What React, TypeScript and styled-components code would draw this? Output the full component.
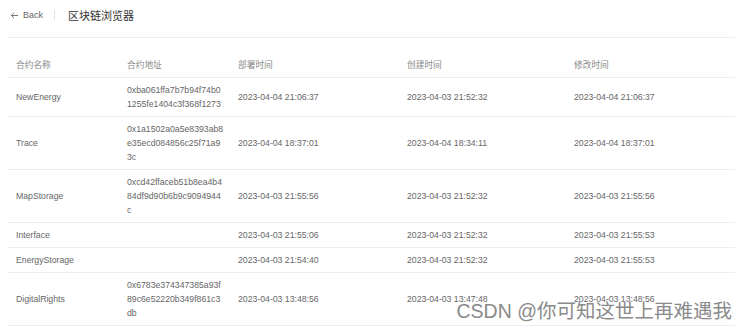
import React from "react";
import styled, { createGlobalStyle } from "styled-components";

type Contract = {
	name: string;
	address: string[];
	deployed: string;
	created: string;
	modified: string;
};

const contracts: Contract[] = [
	{
		name: "NewEnergy",
		address: ["0xba061ffa7b7b94f74b0", "1255fe1404c3f368f1273"],
		deployed: "2023-04-04 21:06:37",
		created: "2023-04-03 21:52:32",
		modified: "2023-04-04 21:06:37",
	},
	{
		name: "Trace",
		address: ["0x1a1502a0a5e8393ab8", "e35ecd084856c25f71a9", "3c"],
		deployed: "2023-04-04 18:37:01",
		created: "2023-04-04 18:34:11",
		modified: "2023-04-04 18:37:01",
	},
	{
		name: "MapStorage",
		address: ["0xcd42ffaceb51b8ea4b4", "84df9d90b6b9c9094944", "c"],
		deployed: "2023-04-03 21:55:56",
		created: "2023-04-03 21:52:32",
		modified: "2023-04-03 21:55:56",
	},
	{
		name: "Interface",
		address: [],
		deployed: "2023-04-03 21:55:06",
		created: "2023-04-03 21:52:32",
		modified: "2023-04-03 21:55:53",
	},
	{
		name: "EnergyStorage",
		address: [],
		deployed: "2023-04-03 21:54:40",
		created: "2023-04-03 21:52:32",
		modified: "2023-04-03 21:55:53",
	},
	{
		name: "DigitalRights",
		address: ["0x6783e374347385a93f", "89c6e52220b349f861c3", "db"],
		deployed: "2023-04-03 13:48:56",
		created: "2023-04-03 13:47:48",
		modified: "2023-04-03 13:48:56",
	},
];

const columns = ["合约名称", "合约地址", "部署时间", "创建时间", "修改时间"];
const widths = [111, 111, 169, 167, 169];

const GlobalStyle = createGlobalStyle`
	body {
		margin: 0;
		background: #fff;
		font-family: "Liberation Sans", Arial, "Noto Sans CJK SC", sans-serif;
	}
`;

const Page = styled.div`
	position: relative;
	width: 747px;
	height: 330px;
	overflow: hidden;
	padding: 0 12px 0 8px;
	box-sizing: border-box;
`;

const PageHeader = styled.div`
	display: flex;
	align-items: center;
	height: 30px;
	padding: 0 0 7px 2px;
	border-bottom: 1px solid #ebeef5;
`;

const BackLink = styled.div`
	display: flex;
	align-items: center;
	gap: 4px;
	font-size: 9px;
	color: #666;
	padding-right: 11px;
	border-right: 1px solid #dcdfe6;
	height: 10px;
`;

const Title = styled.div`
	margin-left: 13px;
	font-size: 11px;
	color: #333;
`;

const Table = styled.table`
	margin-top: 15px;
	width: 727px;
	border-collapse: collapse;
	table-layout: fixed;
	font-size: 8.7px;
`;

const HeadCell = styled.th`
	text-align: left;
	font-weight: normal;
	color: #888;
	padding: 5px 8px;
	height: 14px;
	line-height: 14px;
	border-bottom: 1px solid #ebeef5;
`;

const Cell = styled.td`
	color: #666;
	padding: 5px 8px;
	line-height: 14px;
	white-space: nowrap;
	vertical-align: middle;
	border-bottom: 1px solid #ebeef5;
`;

const AddressLine = styled.div`
	line-height: 14px;
`;

const Watermark = styled.div`
	position: absolute;
	right: 15px;
	bottom: 6px;
	font-size: 19.5px;
	color: #8a8a8a;
	font-family: "Liberation Sans", "Noto Sans CJK SC", sans-serif;
	text-shadow: 0 0 2px #fff;
	pointer-events: none;
`;

const ArrowLeft = () => (
	<svg width="9" height="9" viewBox="0 0 10 10" fill="none" stroke="#666" strokeWidth="1">
		<path d="M9 5H1.5M4.5 2 1.5 5l3 3" />
	</svg>
);

export default function App() {
	return (
		<>
			<GlobalStyle />
			<Page>
				<PageHeader>
					<BackLink>
						<ArrowLeft />
						Back
					</BackLink>
					<Title>区块链浏览器</Title>
				</PageHeader>
				<Table>
					<colgroup>
						{widths.map((w, i) => (
							<col key={i} style={{ width: w }} />
						))}
					</colgroup>
					<thead>
						<tr>
							{columns.map((c) => (
								<HeadCell key={c}>{c}</HeadCell>
							))}
						</tr>
					</thead>
					<tbody>
						{contracts.map((c) => (
							<tr key={c.name}>
								<Cell>{c.name}</Cell>
								<Cell>
									{c.address.map((line, i) => (
										<AddressLine key={i}>{line}</AddressLine>
									))}
								</Cell>
								<Cell>{c.deployed}</Cell>
								<Cell>{c.created}</Cell>
								<Cell>{c.modified}</Cell>
							</tr>
						))}
					</tbody>
				</Table>
				<Watermark>CSDN @你可知这世上再难遇我</Watermark>
			</Page>
		</>
	);
}
